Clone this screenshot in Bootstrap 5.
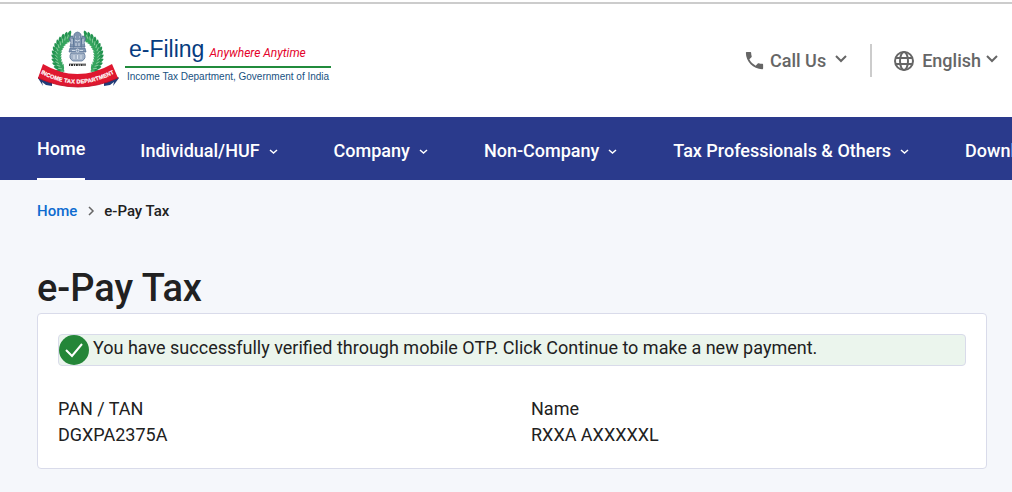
<!DOCTYPE html>
<html lang="en">
<head>
<meta charset="utf-8">
<meta name="viewport" content="width=device-width, initial-scale=1">
<title>e-Pay Tax | e-Filing</title>
<link href="https://cdn.jsdelivr.net/npm/bootstrap@5.3.0/dist/css/bootstrap.min.css" rel="stylesheet">
<style>
  body { font-family: Roboto, sans-serif; font-size: 18px; line-height: 26px; color: #212121; background: #f5f7fb; overflow-x: hidden; }
  a { font-weight: 500; }
  .site-header { min-height: 117px; padding: 0 13px 0 37px; background: #fff; }
  .site-header::before { content: ""; position: absolute; inset: 2px 0 auto; height: 2px; background: #ccc; }
  .emblem { width: 84px; height: 60px; }
  .brand-words { font-family: "Liberation Sans", sans-serif; font-weight: 400; color: #17517f; }
  .brand-top { padding-top: 4px; border-bottom: 2px solid #218b3c; line-height: 26px; white-space: nowrap; }
  .brand-name { font-size: 23px; color: #063c80; }
  .brand-tag { font-family: Roboto, sans-serif; font-size: 12px; font-style: italic; color: #e4032b; }
  .brand-dept { font-size: 10px; line-height: 18px; padding: 0 2px; white-space: nowrap; }
  .tools { padding-top: 4px; }
  .tool-btn, .tool-btn:hover { color: #666; font-size: 18px; line-height: 26px; font-weight: 500; }
  .tool-rule { width: 2px; height: 33px; background: #ccc; margin: 0 22px; }
  .main-nav { background: #2a3a8c; height: 63px; padding-left: 37px; }
  .menu-row { gap: 55px; }
  .main-nav .nav-item { flex: none; }
  .main-nav button, .main-nav button:hover, .main-nav a { color: #fff; font-size: 18px; font-weight: 500; line-height: 26px; white-space: nowrap; text-decoration: none; }
  .main-nav a { height: 63px; padding-top: 19px; border-bottom: 2px solid #fff; }
  .main-nav button { padding: 4px 0 0; }
  .crumbs { font-size: 15px; line-height: 22px; font-weight: 500; }
  .crumbs a { color: #0d6bd0; }
  .page-body { padding: 20px 25px 23px 37px; }
  h1 { font-size: 38px; line-height: 50px; font-weight: 500; margin: 41px 0 0; }
  .pay-card { border: 1px solid #d9dbea; border-radius: 4px; background: #fff; padding: 20px; }
  .verified { border: 1px solid #d9dbea; border-radius: 4px; background: #ebf5ed; min-height: 32px; margin-bottom: 30px; }
  .details { --bs-gutter-x: 38px; }
  dt { font-weight: 400; }
</style>
</head>
<body>
<header class="site-header position-relative d-flex align-items-center justify-content-between">
  <a href="#" class="d-flex align-items-center text-decoration-none" aria-label="e-Filing home">
    <svg class="emblem" viewBox="-1 0 84 60" aria-hidden="true">
      <defs>
        <g id="leaf">
          <path d="M0-3Q-3-7-5-6Q-5-2-1 0Z" transform="translate(-22 0)" fill="#239450"/>
          <path d="M0-3Q4-6 7-5Q5-1 0 1Z" transform="translate(-23 0)" fill="#35a45e"/>
          <path d="M-24-2l3 3" stroke="#a9dcb5" stroke-width=".7"/>
        </g>
        <g id="branch">
          <path d="M-15 17A23 23 0 0 1-7-21" fill="none" stroke="#188447" stroke-width="4"/>
          <use href="#leaf" transform="rotate(-46)"/><use href="#leaf" transform="rotate(-37)"/><use href="#leaf" transform="rotate(-28)"/><use href="#leaf" transform="rotate(-19)"/><use href="#leaf" transform="rotate(-10)"/><use href="#leaf" transform="rotate(-1)"/><use href="#leaf" transform="rotate(8)"/><use href="#leaf" transform="rotate(17)"/><use href="#leaf" transform="rotate(26)"/><use href="#leaf" transform="rotate(35)"/><use href="#leaf" transform="rotate(44)"/><use href="#leaf" transform="rotate(53)"/><use href="#leaf" transform="rotate(62)"/>
        </g>
        <path id="bannerLine" d="M2 41Q39 63 77 41"/>
      </defs>
      <use href="#branch" transform="translate(39.5 27) scale(.95 .96)"/>
      <use href="#branch" transform="translate(39.5 27) scale(-.95 .96)"/>
      <g fill="#8296b1" stroke="#4c688e" stroke-width=".7">
        <path d="M36 8Q35 4 39.500 3Q44 4 43 8L44 18H35Z"/>
        <path d="M35 7Q31 7 31.500 11L33 13L32 18H36Z"/>
        <path d="M44 7Q48 7 47.500 11L46 13L47 18H43Z"/>
        <path d="M32 19H47L48 23H31Z"/>
        <path d="M33 24Q30 29 35 32H44Q49 29 46 24Z" fill="#a5b4c8"/>
      </g>
      <g fill="none" stroke="#e5edf5" stroke-width=".8"><path d="M37 8h1m3 0h1M37 11q2.500 2 5 0M38 14v3m3-3v3M34 10v5m11-5v5"/><circle cx="39.500" cy="21.500" r="1.500"/><path d="M34 21.500h3m5 0h3M36 26v4m3.500-4v4M43 26v4"/></g>
      <path d="M31 35h17" stroke="#222" stroke-width=".6"/><path d="M31 36h17" stroke="#333" stroke-width="2" stroke-dasharray="1.200 .8 2 .8"/>
      <path d="M0 48L14 51V57L8 56L4 53L5 57L0 49ZM80 48L66 51V57L72 56L76 53L75 57L81 49Z" fill="#213c78"/>
      <path d="M5 35Q39 55 74 35L80 49Q40 67 0 49Z" fill="#df1830"/>
      <path d="M0 49Q40 67 80 49" fill="none" stroke="#b90c25" stroke-width=".8"/>
      <text font-family="Liberation Sans, sans-serif" font-size="5.600" font-weight="700" fill="#fff" stroke="#fff" stroke-width=".2" dy="2.500"><textPath href="#bannerLine" startOffset="50%" text-anchor="middle">INCOME TAX DEPARTMENT</textPath></text>
    </svg>
    <span class="brand-words d-block ms-1">
      <span class="brand-top d-block ps-1"><span class="brand-name">e-Filing</span> <span class="brand-tag">Anywhere Anytime</span></span>
      <span class="brand-dept d-block">Income Tax Department, Government of India</span>
    </span>
  </a>
  <div class="tools d-flex align-items-center">
    <button type="button" class="tool-btn btn btn-link p-0 border-0 text-decoration-none d-flex align-items-center">
      <svg width="23" height="23" viewBox="0 0 24 24" fill="currentColor" aria-hidden="true"><path d="M6.620 10.790c1.440 2.830 3.760 5.140 6.590 6.590l2.200-2.200c.27-.27.67-.36 1.020-.24 1.120.37 2.330.57 3.570.57.550 0 1 .45 1 1V20c0 .550-.45 1-1 1-9.390 0-17-7.610-17-17 0-.550.450-1 1-1h3.500c.550 0 1 .450 1 1 0 1.250.200 2.450.570 3.570.110.350.030.740-.250 1.020z"/></svg>
      <span class="ms-1">Call Us</span>
      <svg class="ms-2 mb-1" width="14" height="14" viewBox="0 0 14 14" fill="none" stroke="currentColor" stroke-width="2" aria-hidden="true"><path d="M2 4l5 5 5-5"/></svg>
    </button>
    <span class="tool-rule"></span>
    <button type="button" class="tool-btn btn btn-link p-0 border-0 text-decoration-none d-flex align-items-center">
      <svg width="20" height="20" viewBox="0 0 20 20" fill="none" stroke="currentColor" stroke-width="2" aria-hidden="true"><circle cx="10" cy="10" r="9"/><ellipse cx="10" cy="10" rx="4" ry="9"/><path d="M2 7h16M2 13h16"/></svg>
      <span class="ms-2">English</span>
      <svg class="ms-1 mb-1" width="14" height="14" viewBox="0 0 14 14" fill="none" stroke="currentColor" stroke-width="2" aria-hidden="true"><path d="M2 4l5 5 5-5"/></svg>
    </button>
  </div>
</header>
<nav class="main-nav overflow-hidden" aria-label="Main">
  <ul class="nav flex-nowrap align-items-center h-100 menu-row">
    <li class="nav-item"><a class="d-block" href="#" aria-current="page">Home</a></li>
    <li class="nav-item"><button type="button" class="btn border-0">Individual/HUF<svg class="ms-2" width="11" height="12" viewBox="0 0 11 12" fill="none" stroke="currentColor" stroke-width="1.500"><path d="M2 4l3.500 3L9 4"/></svg></button></li>
    <li class="nav-item"><button type="button" class="btn border-0">Company<svg class="ms-2" width="11" height="12" viewBox="0 0 11 12" fill="none" stroke="currentColor" stroke-width="1.500"><path d="M2 4l3.500 3L9 4"/></svg></button></li>
    <li class="nav-item"><button type="button" class="btn border-0">Non-Company<svg class="ms-2" width="11" height="12" viewBox="0 0 11 12" fill="none" stroke="currentColor" stroke-width="1.500"><path d="M2 4l3.500 3L9 4"/></svg></button></li>
    <li class="nav-item"><button type="button" class="btn border-0">Tax Professionals &amp; Others<svg class="ms-2" width="11" height="12" viewBox="0 0 11 12" fill="none" stroke="currentColor" stroke-width="1.500"><path d="M2 4l3.500 3L9 4"/></svg></button></li>
    <li class="nav-item"><button type="button" class="btn border-0">Downloads</button></li>
  </ul>
</nav>
<main class="page-body">
  <nav class="crumbs d-flex align-items-center" aria-label="Breadcrumb">
    <a href="#" class="text-decoration-none">Home</a>
    <svg class="mx-2" width="11" height="12" viewBox="0 0 11 12" fill="none" stroke="#666" stroke-width="1.500" aria-hidden="true"><path d="M4 2l4 4-4 4"/></svg>
    <span aria-current="page">e-Pay Tax</span>
  </nav>
  <h1>e-Pay Tax</h1>
  <section class="pay-card">
    <div class="verified d-flex" role="status">
      <svg class="flex-shrink-0" width="30" height="30" viewBox="0 0 30 30" fill="none" aria-hidden="true"><circle cx="15" cy="15" r="15" fill="#248638"/><path d="M7 15l6 6L23 9" stroke="#fff" stroke-width="2"/></svg>
      <p class="mb-0 ms-1">You have successfully verified through mobile OTP. Click Continue to make a new payment.</p>
    </div>
    <dl class="details row mb-0">
      <div class="col-6"><dt>PAN / TAN</dt><dd class="mb-0">DGXPA2375A</dd></div>
      <div class="col-6"><dt>Name</dt><dd class="mb-0">RXXA AXXXXXL</dd></div>
    </dl>
  </section>
</main>
<script src="https://cdn.jsdelivr.net/npm/bootstrap@5.3.0/dist/js/bootstrap.bundle.min.js"></script>
</body>
</html>
